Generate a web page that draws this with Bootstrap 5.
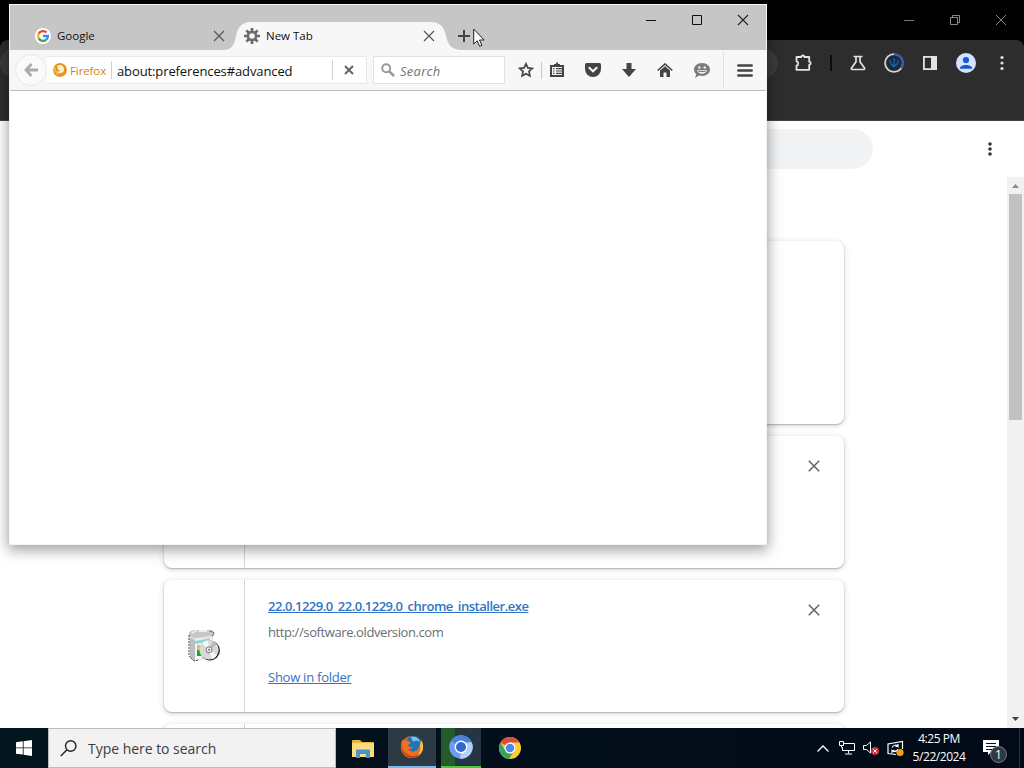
<!DOCTYPE html>
<html lang="en">
<head>
    <meta charset="UTF-8">
    <meta name="viewport" content="width=device-width, initial-scale=1.0">
    <title>Desktop</title>
    <link href="https://cdn.jsdelivr.net/npm/bootstrap@5.3.0/dist/css/bootstrap.min.css" rel="stylesheet">
    <style>
        body {
            width: 1024px;
            height: 768px;
            overflow: hidden;
            font-family: "Open Sans", "Noto Sans", sans-serif;
            font-size: 12px;
            line-height: 1;
            color: #111;
        }

        svg {
            display: block;
            flex: none;
        }

        .slot {
            display: flex;
            align-items: center;
            justify-content: center;
            flex: none;
            width: 36px;
        }

        /* --- Chrome window in the background --- */
        .chrome-title {
            height: 40px;
            background: #000;
        }

        .chrome-title .slot,
        .win-controls .slot {
            width: 46px;
        }

        .chrome-tools {
            height: 81px;
            padding-top: 8px;
            background: #2d2d2d;
            border-radius: 8px 8px 0 0;
            box-shadow: inset 0 -1px #444;
        }

        .chrome-tools .slot {
            height: 30px;
        }

        .omnibox {
            width: 778px;
            height: 30px;
            border-radius: 15px;
            background: #3b3b3b;
        }

        .page-head {
            height: 56px;
        }

        .search-pill {
            width: 681px;
            height: 40px;
            margin-left: 192px;
            border-radius: 20px;
            background: #f1f3f4;
        }

        .downloads {
            padding: 64px 0 0 164px;
        }

        .item-box {
            width: 680px;
            height: 132px;
            margin-bottom: 12px;
            flex: none;
            border-radius: 8px;
            background: #fff;
            box-shadow: 0 1px 2px rgba(60, 64, 67, .38), 0 1px 5px 2px rgba(60, 64, 67, .09);
        }

        .item-box.tall {
            height: 183px;
        }

        .item-icon {
            width: 81px;
            border-right: 1px solid #d4d4d4;
        }

        .item-text {
            padding: 20px 0 0 23px;
            font-size: 13px;
            letter-spacing: -.25px;
        }

        .item-text a {
            color: #2f74c8;
        }

        .item-text .file-name {
            font-weight: 600;
            letter-spacing: -.49px;
        }

        .item-url {
            margin-top: 13px;
            letter-spacing: -.4px;
            color: #6a6e72;
        }

        .item-close {
            width: 60px;
            height: 60px;
        }

        .scrollbar {
            width: 17px;
            background: #f1f1f1;
        }

        .scroll-thumb {
            width: 13px;
            height: 226px;
            background: #c1c1c1;
        }

        /* --- Firefox window on top --- */
        .fx-window {
            position: absolute;
            left: 9px;
            top: 4px;
            width: 758px;
            height: 541px;
            border: 1px solid #f4f4f4;
            background: #fff;
            box-shadow: 0 4px 13px 1px rgba(0, 0, 0, .38);
        }

        .tab-strip {
            height: 45px;
            background: #c6c6c6;
        }

        .fx-tab {
            height: 28px;
            font-size: 11.5px;
        }

        .fx-tab span {
            padding-left: 6px;
        }

        .tab-google {
            width: 202px;
            margin-left: 25px;
        }

        .tab-google svg:last-child {
            margin-right: 12px;
        }

        .tab-new {
            position: relative;
            width: 197px;
            margin-left: 7px;
        }

        .tab-new svg:last-child {
            margin-right: 6px;
        }

        .tab-shape {
            position: absolute;
            left: -21px;
            top: 0;
        }

        .tab-new > :not(.tab-shape) {
            position: relative;
        }

        .tab-add {
            margin-left: 5px;
        }

        .win-controls .slot {
            height: 29px;
        }

        .fx-nav {
            height: 41px;
            background: #f7f7f7;
            border-bottom: 1px solid #bdbdbd;
        }

        .back-btn {
            width: 32px;
            height: 32px;
            margin-left: 5px;
            border: 1px solid #e9e9e9;
            border-radius: 50%;
            background: #fafafa;
            z-index: 1;
        }

        .url-box {
            width: 320px;
            height: 28px;
            background: #fff;
            border: 1px solid #e9e9e9;
            border-left: 0;
            font-size: 13px;
        }

        .identity {
            width: 65px;
            height: 18px;
            padding-left: 6px;
            border-right: 1px solid #d0d0d0;
            color: #d18316;
            font-size: 11.5px;
            letter-spacing: -.1px;
        }

        .identity span {
            padding: 2px 0 0 3px;
        }

        .url-text {
            width: 220px;
            padding: 2px 0 0 5px;
            letter-spacing: -.11px;
        }

        .stop-btn {
            width: 33px;
            height: 20px;
            border-left: 1px solid #d0d0d0;
        }

        .search-box {
            width: 132px;
            height: 28px;
            margin-left: 6px;
            padding-left: 7px;
            background: #fff;
            border: 1px solid #e2e2e2;
            color: #737373;
            font-size: 13px;
        }

        .search-box em {
            padding: 2px 0 0 5px;
            letter-spacing: .25px;
        }

        .star-slot {
            width: 26px;
            margin: 0 2px 0 8px;
        }

        .list-slot {
            width: 30px;
            margin-right: 3px;
        }

        .smile-slot {
            width: 38px;
            margin-right: 2px;
        }

        .menu-slot {
            width: 42px;
        }

        .nav-rule {
            width: 1px;
            height: 17px;
            background: #c8c8c8;
        }

        .nav-rule.full {
            height: 36px;
            background: #e2e2e2;
        }

        .pointer {
            position: absolute;
            left: 473px;
            top: 28px;
        }

        /* --- Taskbar --- */
        .taskbar {
            height: 40px;
            background: linear-gradient(90deg, #02161e, #020f1a 50%, #020a18);
            color: #fff;
        }

        .taskbar .slot {
            width: 48px;
        }

        .task-search {
            width: 288px;
            background: #f2f2f2;
            border: 1px solid #b9bdc0;
            color: #3d3d3d;
            font-size: 14px;
            padding-left: 11px;
        }

        .task-search span {
            padding: 2px 0 0 11px;
            letter-spacing: -.03px;
        }

        .taskbar .task-files {
            width: 52px;
            padding-left: 1px;
        }

        .task-firefox {
            background: #2c3a44;
            border-bottom: 2px solid #76b9ed;
        }

        .taskbar .task-chromium {
            width: 40px;
            margin: 0 5px;
            background: linear-gradient(90deg, #245b2d 14px, #253642 14px);
            border-bottom: 2px solid #3fce3a;
        }

        .tray {
            margin-right: 4px;
            border-right: 1px solid #2b3642;
        }

        .taskbar .tray-slot {
            width: 24px;
        }

        .clock {
            width: 64px;
            padding-top: 2px;
            font-size: 12px;
            letter-spacing: -.45px;
            line-height: 18px;
        }

        .notify-slot {
            padding-top: 5px;
        }
    </style>
</head>
<body class="d-flex flex-column">
    <div class="flex-grow-1 d-flex flex-column overflow-hidden bg-white">
        <div class="bg-black">
            <div class="chrome-title d-flex align-items-center justify-content-end">
                <div class="slot"><svg width="10" height="10" stroke="#777"><path d="M0 5.5h10"/></svg></div>
                <div class="slot"><svg width="11" height="11" fill="none" stroke="#888"><path d="M.5 2.5h7v7h-7zM2.5 2.5v-2h7v7h-2"/></svg></div>
                <div class="slot"><svg width="12" height="12" stroke="#888"><path d="M1 1l10 10M11 1L1 11"/></svg></div>
            </div>
            <div class="chrome-tools d-flex align-items-start">
                <div class="omnibox"></div>
                <div class="slot ms-2">
                    <svg width="18" height="20" viewBox="1 0 18 20" fill="none" stroke="#e3e3e3" stroke-width="1.8"><path d="M2.500 4h4.800a1.500 1.500 0 0 1 3 0h4.900v4.700a1.300 1.300 0 0 1 0 3v5.100H2.500v-4.200a2.200 2.200 0 0 0 0-4.300z" stroke-linejoin="round"/></svg>
                </div>
                <div class="slot" style="width: 18px"><svg width="2" height="16" fill="#0c0c0c"><path d="M0 0h2v16H0z"/></svg></div>
                <div class="slot">
                    <svg width="16" height="16" fill="none" stroke="#e3e3e3" stroke-width="1.7" stroke-linejoin="round"><path d="M3.5 1.5h9M6 2v4.800L1.500 13q-.6 1.500 1 1.500h11q1.600 0 1-1.500L10 6.800V2"/></svg>
                </div>
                <div class="slot">
                    <svg width="20" height="20" fill="none" stroke-width="1.8"><circle cx="10" cy="10" r="8.9" stroke="#d4d4d4"/><path d="M10 1.100A8.900 8.900 0 0 1 17.200 15.200" stroke="#2653a4"/><circle cx="10" cy="10" r="7" fill="#162b3d"/><path d="M10 5v8.500M6.500 10.300l3.500 3.500 3.500-3.500M6 7v3M14 7v3" stroke="#2360bd" stroke-width="1.300"/></svg>
                </div>
                <div class="slot"><svg width="16" height="16"><path d="M1.900 1.900h12.200v12.200H1.900z" fill="none" stroke="#e3e3e3" stroke-width="1.800"/><path d="M9 1h6v14H9z" fill="#e3e3e3"/></svg></div>
                <div class="slot">
                    <svg width="20" height="20" fill="#1a56cf"><circle cx="10" cy="10" r="10" fill="#d3e3fd"/><circle cx="10" cy="7" r="3.100"/><path d="M3.800 15.700c0-5 12.400-5 12.400 0z"/></svg>
                </div>
                <div class="slot"><svg width="4" height="16" fill="#e3e3e3"><circle cx="2" cy="2.500" r="1.600"/><circle cx="2" cy="8" r="1.600"/><circle cx="2" cy="13.500" r="1.600"/></svg></div>
            </div>
        </div>

        <div class="page-head d-flex align-items-center flex-shrink-0">
            <div class="search-pill"></div>
            <div class="slot ms-auto me-3"><svg width="4" height="16" fill="#333"><circle cx="2" cy="3" r="1.800"/><circle cx="2" cy="8" r="1.800"/><circle cx="2" cy="13" r="1.800"/></svg></div>
        </div>

        <div class="d-flex flex-grow-1 overflow-hidden">
            <div class="downloads flex-grow-1 d-flex flex-column overflow-hidden">
                <div class="item-box tall"></div>
                <div class="item-box d-flex">
                    <div class="item-icon"></div>
                    <div class="item-close slot ms-auto"><svg width="12" height="12" stroke="#5f6368" stroke-width="1.500"><path d="M.8.8l10.400 10.400M11.200.8L.8 11.200"/></svg></div>
                </div>
                <div class="item-box d-flex">
                    <div class="item-icon d-flex align-items-center justify-content-center">
                        <!-- installer box with a disc in front -->
                        <svg width="32" height="34" viewBox="0 0 32 34">
                            <path d="M1 4l3-3h21l2 3-2 4v20l-17 4-6-3z" fill="#d9dcdc"/>
                            <path d="M2 9l5 2v21l-5-3z" fill="#b9bebf"/>
                            <path d="M7 10l17-2v19L7 31z" fill="#f0f4f4"/>
                            <path d="M1 3l5-2 18 0 1 5-18 3-6-2z" fill="#c6c8c8"/>
                            <path d="M4 4l5-3M11 2h8" stroke="#ededed" stroke-width="2"/>
                            <path d="M1 8V5m0 4v18l5 5 5-1M22 2l4 2-2 4" stroke="#444" stroke-width="1" stroke-dasharray="2 1" fill="none"/>
                            <path d="M7 12l15-3v4L7 15z" fill="#91d5d6"/>
                            <path d="M9 16h5v6H9z" fill="#e6b74a"/>
                            <path d="M9 21h4v6H9z" fill="#16a82a"/>
                            <path d="M12 20h3v6h-3z" fill="#46c830"/>
                            <circle cx="21.900" cy="21.500" r="10" fill="#222"/>
                            <circle cx="21" cy="20.800" r="9.700" fill="#d8dada"/>
                            <path d="M21 21L14 14.500a9.700 9.700 0 0 1 6-3.100zM21 21l8 5a9.700 9.700 0 0 1-5 4.200z" fill="#f7f7f7"/>
                            <path d="M21 21l4-8.800a9.700 9.700 0 0 1 4 3.500z" fill="#b5b9ba"/>
                            <circle cx="21" cy="20.800" r="3" fill="#eee" stroke="#777"/>
                            <circle cx="21" cy="20.800" r="1" fill="#777"/>
                        </svg>
                    </div>
                    <div class="item-text">
                        <div><a href="#" class="file-name">22.0.1229.0_22.0.1229.0_chrome_installer.exe</a></div>
                        <div class="item-url">http://software.oldversion.com</div>
                        <div class="mt-4 pt-2"><a href="#">Show in folder</a></div>
                    </div>
                    <div class="item-close slot ms-auto"><svg width="12" height="12" stroke="#5f6368" stroke-width="1.500"><path d="M.8.8l10.400 10.400M11.200.8L.8 11.200"/></svg></div>
                </div>
                <div class="item-box d-flex"><div class="item-icon"></div></div>
            </div>
            <div class="scrollbar d-flex flex-column align-items-center flex-shrink-0">
                <div class="slot" style="height: 17px"><svg width="7" height="4" fill="#8b8b8b"><path d="M0 4l3.500-4L7 4z"/></svg></div>
                <div class="scroll-thumb"></div>
                <div class="slot mt-auto" style="height: 18px"><svg width="7" height="4" fill="#404040"><path d="M0 0h7L3.500 4z"/></svg></div>
            </div>
        </div>
    </div>

    <div class="fx-window">
        <div class="tab-strip d-flex align-items-end">
            <div class="fx-tab tab-google d-flex align-items-center">
                <svg width="16" height="16" fill="none" stroke-width="2.300"><circle cx="8" cy="8" r="8" fill="#fff"/><path d="M3.700 5.600A4.900 4.900 0 0 1 11.500 4.500" stroke="#ea4335"/><path d="M3.700 5.600A4.900 4.900 0 0 0 3.700 10.400" stroke="#fbbc05"/><path d="M3.700 10.400A4.900 4.900 0 0 0 11.200 11.700" stroke="#34a853"/><path d="M8 8h4.900A4.900 4.900 0 0 1 11.200 11.700" stroke="#4285f4"/></svg>
                <span class="flex-grow-1">Google</span>
                <svg width="12" height="12" stroke="#555" stroke-width="1.200"><path d="M1 1l10 10M11 1L1 11"/></svg>
            </div>
            <div class="fx-tab tab-new d-flex align-items-center">
                <svg class="tab-shape" width="244" height="28" fill="#f7f7f7"><path d="M0 28C9 28 11 23 13 14S19 0 28 0H207C218 0 221 5 223 14S229 28 239 28z"/></svg>
                <svg width="16" height="16" viewBox="-8 -8 16 16" fill="none" stroke="#6d6d6d"><circle r="4.100" stroke-width="2.600"/><path d="M0-8v4M0 8V4M-8 0h4M8 0H4M-5.600-5.600l2.800 2.800M5.600 5.600L2.800 2.800M-5.600 5.600l2.800-2.800M5.600-5.600L2.800-2.800" stroke-width="2.700"/></svg>
                <span class="flex-grow-1">New Tab</span>
                <svg width="12" height="12" stroke="#555" stroke-width="1.200"><path d="M1 1l10 10M11 1L1 11"/></svg>
            </div>
            <div class="fx-tab tab-add slot"><svg width="12" height="12" stroke="#444" stroke-width="2"><path d="M6 0v12M0 6h12"/></svg></div>
            <div class="win-controls d-flex align-self-start ms-auto">
                <div class="slot"><svg width="10" height="10" stroke="#111"><path d="M0 5.500h10"/></svg></div>
                <div class="slot"><svg width="10" height="10" fill="none" stroke="#111"><path d="M.5.5h9v9h-9z"/></svg></div>
                <div class="slot"><svg width="12" height="12" stroke="#222" stroke-width="1.100"><path d="M1 1l10 10M11 1L1 11"/></svg></div>
            </div>
        </div>

        <div class="fx-nav d-flex align-items-center">
            <div class="back-btn d-flex align-items-center justify-content-center">
                <svg width="14" height="14" fill="none" stroke="#aaa" stroke-width="2.800"><path d="M7.500 1L2 7l5.500 6M2 7h12"/></svg>
            </div>
            <div class="url-box d-flex align-items-center">
                <div class="identity d-flex align-items-center">
                    <svg width="14" height="14"><circle cx="7" cy="7" r="6.900" fill="#e8931e"/><path d="M4.500 2.500C8 1 11.500 3 11 7c-.5 3.500-5 4.500-7.500 1.500 2 .5 3.500-.3 3.500-1.500-2 .5-2.800-.5-2-2-1-.3-1-1.500-.5-2.500z" fill="#fdf0d0"/><path d="M1.500 4c.5 4 1 6 4 7.500" stroke="#f6bf4f" stroke-width="1.500" fill="none"/></svg>
                    <span>Firefox</span>
                </div>
                <div class="url-text">about:preferences#advanced</div>
                <div class="stop-btn d-flex align-items-center justify-content-center"><svg width="10" height="10" stroke="#666" stroke-width="2"><path d="M1 1l8 8M9 1L1 9"/></svg></div>
            </div>
            <div class="search-box d-flex align-items-center">
                <svg width="14" height="14" fill="none" stroke="#999"><circle cx="5.200" cy="5.200" r="4" stroke-width="2"/><path d="M8.300 8.300L13 13" stroke-width="2.500"/></svg>
                <em>Search</em>
            </div>
            <div class="slot star-slot"><svg width="16" height="16" fill="none" stroke="#444" stroke-width="1.700"><path d="M8 1.800l1.900 4.100 4.400.5-3.300 3 .9 4.500L8 11.700l-3.900 2.200.9-4.500-3.300-3 4.400-.5z"/></svg></div>
            <div class="nav-rule"></div>
            <div class="slot list-slot"><svg width="16" height="16" fill="none" stroke="#444" stroke-width="2"><path d="M2 4h12v10H2z"/><path d="M4 6.700h1.500M7 6.700h6M4 9h1.500M7 9h6M4 11.300h1.500M7 11.300h6" stroke-width="1.200"/><path d="M5 3.500V2h2V.5h2V2h2v1.500z" fill="#444" stroke="none"/></svg></div>
            <div class="slot"><svg width="16" height="14"><path d="M1.500 0h13Q16 0 16 1.500V6A8 8 0 0 1 0 6V1.500Q0 0 1.500 0z" fill="#444"/><path d="M4.300 4.800L8 8.300l3.700-3.500" fill="none" stroke="#f7f7f7" stroke-width="2" stroke-linecap="round"/></svg></div>
            <div class="slot"><svg width="14" height="14" fill="#444"><path d="M4.500 0h5v6H14l-7 8-7-8h4.500z"/></svg></div>
            <div class="slot"><svg width="16" height="14"><path d="M.7 7.500L8 1l7.300 6.500" fill="none" stroke="#444" stroke-width="1.600"/><path d="M3 7.500L8 3.200l5 4.300V14H9.500V9.500h-3V14H3z" fill="#444"/></svg></div>
            <div class="slot smile-slot"><svg width="16" height="15"><path d="M8 0c5 0 8 3 8 6.500S13 13 8 13c-1 0-2-.1-3-.4L1 15l1.300-3.800C.8 10 0 8.400 0 6.500 0 3 3 0 8 0z" fill="#7b7b7b"/><circle cx="5.300" cy="4.500" r="1.200" fill="#f3f3f3"/><circle cx="10.700" cy="4.500" r="1.200" fill="#f3f3f3"/><path d="M3 7.300h10c-.6 4.500-9.400 4.500-10 0z" fill="#f3f3f3"/><path d="M4.500 8.500h7" stroke="#7b7b7b"/></svg></div>
            <div class="nav-rule full"></div>
            <div class="slot menu-slot"><svg width="16" height="13" stroke="#444" stroke-width="2.700" stroke-linecap="round"><path d="M1.400 1.500h13.200M1.400 6.500h13.200M1.400 11.500h13.200"/></svg></div>
        </div>
    </div>

    <svg class="pointer" width="12" height="20" fill="#fff" stroke="#222"><path d="M.7 1v15l3.500-3.200 2.400 5.500 2.300-1-2.400-5.300h4.600z"/></svg>

    <div class="taskbar d-flex flex-shrink-0">
        <div class="slot"><svg width="16" height="16" fill="#fff"><path d="M0 2.300L6.800 1.300v6.200H0zM7.600 1.200L16 0v7.500H7.600zM0 8.300h6.800v6.300L0 13.700zM7.600 8.300H16V16l-8.400-1.200z"/></svg></div>
        <div class="task-search d-flex align-items-center">
            <svg width="17" height="17" fill="none" stroke="#222" stroke-width="1.400"><circle cx="10.700" cy="6" r="5.200"/><path d="M7 9.800L.8 16"/></svg>
            <span>Type here to search</span>
        </div>
        <div class="slot task-files">
            <svg width="22" height="19"><path d="M0 2Q0 1 1 1h7l2 2h11q1 0 1 1v14H0z" fill="#e9b13d"/><path d="M0 4h22v14H0z" fill="#fbdc7c"/><path d="M4 11.500Q4 10.500 5 10.500h12q1 0 1 1V19h-4v-4H8v4H4z" fill="#4595cc"/></svg>
        </div>
        <div class="slot task-firefox">
            <svg width="24" height="24"><circle cx="12" cy="12" r="11" fill="#e76822"/><circle cx="13.500" cy="9" r="8" fill="#2472b5"/><path d="M11 2q7-1 9 5-4-3-7 0z" fill="#74c4e7"/><path d="M22 7c2 8-2 15-9 16C7 24 1 19 1 12c0-3 .5-6 2-8l1 2c2-1 4-.500 5 .500l2 1.500-3 2c1 2 3 2.500 5 2-1 2-3 2.500-5 2 4 5 12 2 11-4l2 2z" fill="#ed701f"/><path d="M2 7c-1 8 4 14 11 14 5 0 8-3 9-7 0 5-4 9-9 9C5 23 0 16 2 7z" fill="#c93a22"/><path d="M21 5c4 6 2 13-3 16 2-4 3-7 2-11z" fill="#f9c63b"/></svg>
        </div>
        <div class="slot task-chromium">
            <svg width="24" height="24"><circle cx="12" cy="12" r="11.700" fill="#6c9cf4"/><path d="M12 12L1.900 6A11.700 11.700 0 0 1 22.100 6z" fill="#4d7fdc"/><path d="M12 17.500L11 23.700A11.700 11.700 0 0 0 22.800 7.500H12z" fill="#b5d0f8"/><circle cx="12" cy="12" r="6.400" fill="#fff"/><circle cx="12" cy="12" r="5" fill="#3367c8"/></svg>
        </div>
        <div class="slot">
            <svg width="22" height="22"><circle cx="11" cy="11" r="11" fill="#f8ce38"/><path d="M11 11L1.500 5.500A11 11 0 0 1 20.500 5.500H11z" fill="#dc4c40"/><path d="M1.500 5.500A11 11 0 0 0 10 22l5.300-8.500L11 11 6 13z" fill="#39a35b"/><circle cx="11" cy="11" r="5.500" fill="#fff"/><circle cx="11" cy="11" r="4.300" fill="#4b86e8"/></svg>
        </div>
        <div class="tray d-flex ms-auto">
            <div class="slot tray-slot"><svg width="12" height="7" fill="none" stroke="#fff" stroke-width="1.300"><path d="M.5 6.500L6 1l5.500 5.500"/></svg></div>
            <div class="slot tray-slot"><svg width="17" height="14" fill="none" stroke="#fff"><path d="M5 2.500h10.500v7H3.500V6M9.500 9.500v3M6 13h7"/><path d="M.5.500h4v4h-4zM2.500 4.500v2"/></svg></div>
            <div class="slot tray-slot"><svg width="17" height="16" fill="none" stroke="#fff"><path d="M.500 5.500h3L7.500 2v11l-4-3.500h-3z"/><circle cx="12" cy="11" r="4" fill="#cf3140" stroke="none"/><path d="M10.300 9.300l3.400 3.400M13.700 9.300l-3.400 3.400"/></svg></div>
            <div class="slot tray-slot"><svg width="17" height="17" fill="none" stroke="#fff" stroke-width="1.200"><path d="M9 14.500l-8-1V4l14.500-2.500V9"/><path d="M5 7.500q3-4 6-1V4M11 6.500H8.500M11 9.500q-3 3.500-6 1V13M5 10.500h2.500"/><circle cx="13" cy="12.500" r="3.600" fill="#f3a11c" stroke="none"/></svg></div>
            <div class="clock text-center">4:25 PM<br>5/22/2024</div>
            <div class="slot notify-slot">
                <svg width="26" height="24"><path d="M1 1h16v12H9l-3 3v-3H1z" fill="#fff"/><path d="M4 4.500h10M4 7.500h10M4 10.500h7" stroke="#07131f" stroke-width="1.100"/><circle cx="16.500" cy="15.500" r="8" fill="#31383f" stroke="#778"/><text x="16.500" y="20" text-anchor="middle" font-size="12" fill="#fff">1</text></svg>
            </div>
        </div>
    </div>
    <script src="https://cdn.jsdelivr.net/npm/bootstrap@5.3.0/dist/js/bootstrap.bundle.min.js"></script>
</body>
</html>
